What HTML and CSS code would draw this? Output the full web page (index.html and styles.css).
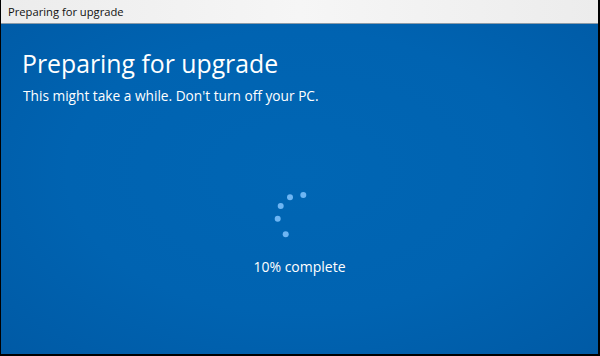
FILE: index.html
```html
<!DOCTYPE html>
<html>
<head>
<meta charset="utf-8">
<link rel="stylesheet" href="styles.css">
</head>
<body>
<div class="window">
  <div class="titlebar">Preparing for upgrade</div>
  <div class="content">
    <h1 class="title">Preparing for upgrade</h1>
    <p class="subtitle">This might take a while. Don't turn off your PC.</p>
    <div class="progress">
      <svg class="spinner" width="40" height="54" viewBox="0 0 40 54">
        <circle cx="35.3" cy="9" r="3" fill="#6db5f3"/>
        <circle cx="22" cy="11.3" r="3" fill="#6db5f3"/>
        <circle cx="12.7" cy="20" r="3" fill="#6db5f3"/>
        <circle cx="9.7" cy="32.7" r="3" fill="#6db5f3"/>
        <circle cx="17.7" cy="48.3" r="3" fill="#6db5f3"/>
      </svg>
      <div class="percent">10% complete</div>
    </div>
  </div>
</div>
</body>
</html>
```
FILE: styles.css
```css
html, body {
  margin: 0;
  padding: 0;
  width: 600px;
  height: 356px;
  overflow: hidden;
}
.window {
  box-sizing: border-box;
  width: 600px;
  height: 356px;
  border-left: 1px solid #000;
  border-right: 2px solid #000;
  border-bottom: 2px solid #000;
  display: flex;
  flex-direction: column;
}
.titlebar {
  height: 24px;
  flex: none;
  box-sizing: border-box;
  border-bottom: 1px solid #8a9aa8;
  background: linear-gradient(90deg, #ececec 0%, #f6f6f6 50%, #ececec 100%);
  font-family: "Open Sans", "Noto Sans", sans-serif;
  font-size: 11.2px;
  color: #111;
  padding: 4px 0 0 7px;
  line-height: 15px;
}
.content {
  flex: 1;
  background: radial-gradient(ellipse at 50% 45%, #0066b4 0%, #0063b1 55%, #005aa5 100%);
  color: #fff;
  font-family: "Open Sans", "Noto Sans", sans-serif;
  padding: 22px 0 0 21px;
  display: flex;
  flex-direction: column;
}
.title {
  margin: 0;
  font-weight: 400;
  font-size: 24.8px;
  line-height: 34px;
}
.subtitle {
  margin: 6px 0 0 1px;
  font-size: 13.7px;
  line-height: 20px;
}
.progress {
  margin: 80px 0 0 0;
  display: flex;
  flex-direction: column;
  align-items: center;
  padding-right: 21px;
}
.spinner {
  display: block;
  margin-left: -24px;
}
.percent {
  margin-top: 18px;
  font-size: 14px;
  line-height: 18px;
}
```
